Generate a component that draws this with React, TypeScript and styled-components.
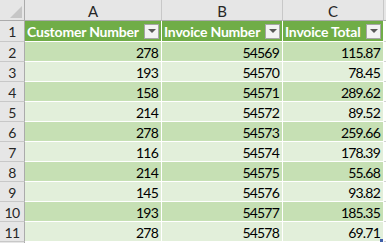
import React from "react";
import styled, { createGlobalStyle } from "styled-components";

const Global = createGlobalStyle`
  html, body { margin: 0; padding: 0; background: #ffffff; }
  body { font-family: Lato, "Liberation Sans", sans-serif; overflow: hidden; }
`;

const rows: [number, number, string][] = [
  [278, 54569, "115.87"],
  [193, 54570, "78.45"],
  [158, 54571, "289.62"],
  [214, 54572, "89.52"],
  [278, 54573, "259.66"],
  [116, 54574, "178.39"],
  [214, 54575, "55.68"],
  [145, 54576, "93.82"],
  [193, 54577, "185.35"],
  [278, 54578, "69.71"],
];

const rowHeights = [21, 21, 20, 20, 20, 20, 20, 20, 20, 20, 20, 20];

const Sheet = styled.div`
  display: grid;
  grid-template-columns: 25px 137px 121px 101px 1fr;
  width: 386px;
  height: 243px;
  overflow: hidden;
  font-size: 14px;
  line-height: 17px;
  color: #000;
  background: linear-gradient(to right, #e6e6e6 24px, #ababab 24px, #ababab 25px, #ffffff 25px);
`;

const Corner = styled.div`
  position: relative;
  background: #e6e6e6;
  border-right: 1px solid #ababab;
  border-bottom: 1px solid #ababab;
  box-sizing: border-box;
`;

const CornerTri = styled.div`
  position: absolute;
  right: 2px;
  bottom: 2px;
  width: 0;
  height: 0;
  border-left: 12px solid transparent;
  border-bottom: 12px solid #c6c6c6;
`;

const ColHead = styled.div`
  display: flex;
  align-items: center;
  justify-content: center;
  padding-top: 2px;
  background: #e6e6e6;
  border-right: 1px solid #c8c8c8;
  border-bottom: 1px solid #ababab;
  box-sizing: border-box;
  color: #262626;
  font-size: 15px;
`;

const RowHead = styled.div`
  display: flex;
  align-items: flex-start;
  justify-content: center;
  padding-top: 2px;
  background: #e6e6e6;
  border-right: 1px solid #ababab;
  border-bottom: 1px solid #c8c8c8;
  box-sizing: border-box;
  color: #262626;
  font-size: 14px;
  letter-spacing: -0.5px;
`;

const HeadCell = styled.div`
  display: flex;
  align-items: center;
  justify-content: space-between;
  background: #70ad47;
  color: #ffffff;
  font-weight: bold;
  font-size: 14px;
  letter-spacing: -0.2px;
  padding-left: 2px;
  padding-right: 2px;
  border-right: 1px solid #ffffff;
  border-bottom: 1px solid #ffffff;
  box-sizing: border-box;
  white-space: nowrap;
  overflow: hidden;
`;

const Filter = styled.div`
  width: 15px;
  height: 15px;
  flex: none;
  box-sizing: border-box;
  border: 1px solid #a6a6a6;
  background: #f3f3f3;
  display: flex;
  align-items: center;
  justify-content: center;
`;

const Tri = styled.div`
  width: 0;
  height: 0;
  border-left: 4px solid transparent;
  border-right: 4px solid transparent;
  border-top: 4px solid #595959;
`;

const Cell = styled.div<{ $band: boolean }>`
  position: relative;
  display: flex;
  align-items: flex-start;
  justify-content: flex-end;
  padding-right: 3px;
  padding-top: 2px;
  letter-spacing: -0.8px;
  background: ${(p) => (p.$band ? "#c6e0b4" : "#e2efda")};
  border-right: 1px solid #ffffff;
  border-bottom: 1px solid #ffffff;
  box-sizing: border-box;
`;

const Blank = styled.div`
  background: #ffffff;
  border-bottom: 1px solid #d4d4d4;
  box-sizing: border-box;
`;

const BlankHead = styled.div`
  background: #e6e6e6;
  border-bottom: 1px solid #ababab;
  box-sizing: border-box;
`;

const Handle = styled.div`
  position: absolute;
  right: 0px;
  bottom: -1px;
  width: 3px;
  height: 3px;
  background: #3f5fa8;
`;

export default function App() {
  return (
    <>
      <Global />
      <Sheet style={{ gridTemplateRows: rowHeights.map((h) => h + "px").join(" ") }}>
        <Corner>
          <CornerTri />
        </Corner>
        <ColHead>A</ColHead>
        <ColHead>B</ColHead>
        <ColHead>C</ColHead>
        <BlankHead />

        <RowHead>1</RowHead>
        <HeadCell>
          Customer Number
          <Filter>
            <Tri />
          </Filter>
        </HeadCell>
        <HeadCell>
          Invoice Number
          <Filter>
            <Tri />
          </Filter>
        </HeadCell>
        <HeadCell>
          Invoice Total
          <Filter>
            <Tri />
          </Filter>
        </HeadCell>
        <Blank />

        {rows.map((r, i) => (
          <React.Fragment key={i}>
            <RowHead>{i + 2}</RowHead>
            <Cell $band={i % 2 === 0}>{r[0]}</Cell>
            <Cell $band={i % 2 === 0}>{r[1]}</Cell>
            <Cell $band={i % 2 === 0}>
              {r[2]}
              {i === rows.length - 1 && <Handle />}
            </Cell>
            <Blank />
          </React.Fragment>
        ))}
      </Sheet>
    </>
  );
}
